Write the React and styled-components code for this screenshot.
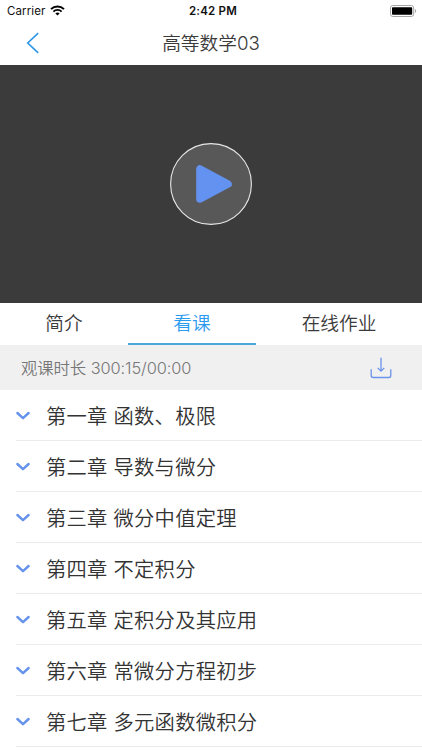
import React from "react";
import styled, { createGlobalStyle } from "styled-components";

const chapters = [
  "第一章 函数、极限",
  "第二章 导数与微分",
  "第三章 微分中值定理",
  "第四章 不定积分",
  "第五章 定积分及其应用",
  "第六章 常微分方程初步",
  "第七章 多元函数微积分",
];

const tabs = ["简介", "看课", "在线作业"];

const WifiIcon = () => (
  <svg width="15" height="11" viewBox="0 0 15 11" fill="none" stroke="#000">
    <path d="M1 4.1a9.3 9.3 0 0 1 13 0" strokeWidth="2" />
    <path d="M3.4 6.6a5.8 5.8 0 0 1 8.2 0" strokeWidth="1.9" />
    <path d="M7.5 10.6 5.4 8.5a3 3 0 0 1 4.2 0z" fill="#000" stroke="none" />
  </svg>
);

const BatteryIcon = () => (
  <svg width="28" height="12" viewBox="0 0 28 12">
    <rect x="0.5" y="0.5" width="23.2" height="11" rx="2.4" fill="#fff" stroke="#a6a6a6" />
    <rect x="2" y="2.3" width="20.2" height="7.4" rx="0.8" fill="#000" />
    <path d="M25 4v4c1.6-.5 1.6-3.5 0-4z" fill="#a6a6a6" />
  </svg>
);

const BackIcon = () => (
  <svg width="14" height="22" viewBox="0 0 14 22" fill="none">
    <path d="M12.2 1.2 1.7 11l10.5 9.8" stroke="#2b96e8" strokeWidth="1.6" />
  </svg>
);

const PlayIcon = () => (
  <svg width="82" height="82" viewBox="0 0 82 82">
    <circle cx="41" cy="41" r="40.4" fill="#585858" stroke="#e8e8e8" strokeWidth="1.1" />
    <path
      d="M30 26v30L58 41z"
      fill="#6492f0"
      stroke="#6492f0"
      strokeWidth="7.6"
      strokeLinejoin="round"
    />
  </svg>
);

const DownloadIcon = () => (
  <svg width="22" height="22" viewBox="0 0 22 22" fill="none" stroke="#6b93ec">
    <path d="M11 .8v13M7.7 10.9 11 14.2l3.3-3.3" strokeWidth="1.3" />
    <path d="M1.2 12.3v6.2a2 2 0 0 0 2 2h15.6a2 2 0 0 0 2-2v-6.2" strokeWidth="1.3" />
  </svg>
);

const ChevronIcon = () => (
  <svg width="14" height="9" viewBox="0 0 14 9" fill="none">
    <path
      d="M1.4 2 7 7.2 12.6 2"
      stroke="#6492ec"
      strokeWidth="2.4"
      strokeLinecap="round"
      strokeLinejoin="round"
    />
  </svg>
);

const App = () => (
  <Page>
    <GlobalStyle />
    <StatusBar>
      <Carrier>
        Carrier
        <WifiIcon />
      </Carrier>
      <Clock>2:42 PM</Clock>
      <Battery>
        <BatteryIcon />
      </Battery>
    </StatusBar>
    <NavBar>
      <BackButton aria-label="返回">
        <BackIcon />
      </BackButton>
      <Title>高等数学03</Title>
    </NavBar>
    <Player>
      <PlayIcon />
    </Player>
    <TabBar>
      {tabs.map((tab) => (
        <Tab key={tab} $active={tab === "看课"}>
          {tab}
        </Tab>
      ))}
    </TabBar>
    <Duration>
      <span>观课时长 300:15/00:00</span>
      <DownloadIcon />
    </Duration>
    <ChapterList>
      {chapters.map((chapter) => (
        <Chapter key={chapter}>
          <ChevronIcon />
          <span>{chapter}</span>
        </Chapter>
      ))}
    </ChapterList>
  </Page>
);

const GlobalStyle = createGlobalStyle`
  * {
    box-sizing: border-box;
  }
  body {
    margin: 0;
    background: #fff;
    overflow: hidden;
  }
  svg {
    display: block;
    flex-shrink: 0;
  }
`;

const Page = styled.div`
  width: 422px;
  height: 750px;
  overflow: hidden;
  background: #fff;
  color: #3a3a3a;
  font-family: Inter, "Noto Sans CJK SC", sans-serif;
  font-weight: 350;
  white-space: nowrap;
`;

const StatusBar = styled.div`
  display: grid;
  grid-template-columns: 1fr auto 1fr;
  align-items: center;
  height: 21px;
  padding: 0 4px 0 7px;
  color: #111;
  font-size: 11.5px;
`;

const Carrier = styled.div`
  display: flex;
  align-items: center;
  gap: 5px;
  font-weight: 400;
  letter-spacing: 0.1px;
`;

const Clock = styled.div`
  padding-left: 1px;
  font-weight: 600;
  letter-spacing: 0.2px;
`;

const Battery = styled.div`
  display: flex;
  justify-content: flex-end;
`;

const NavBar = styled.header`
  display: grid;
  grid-template-columns: 60px 1fr 60px;
  align-items: center;
  height: 44px;
`;

const BackButton = styled.button`
  padding: 0 0 0 26px;
  border: 0;
  background: none;
`;

const Title = styled.h1`
  margin: 0;
  padding-top: 2px;
  font-size: 18.7px;
  font-weight: 350;
  line-height: 28px;
  text-align: center;
`;

const Player = styled.div`
  display: flex;
  align-items: center;
  justify-content: center;
  height: 238px;
  background: #3b3b3b;
`;

const TabBar = styled.nav`
  display: grid;
  grid-template-columns: 128px 128px 1fr;
  height: 42px;
`;

const Tab = styled.div`
  height: 42px;
  border-bottom: 2px solid ${({ $active }) => ($active ? "#4ba6dc" : "transparent")};
  color: ${({ $active }) => ($active ? "#2b9bef" : "#3a3a3a")};
  font-size: 18.7px;
  line-height: 42px;
  text-align: center;
`;

const Duration = styled.div`
  display: flex;
  align-items: center;
  justify-content: space-between;
  height: 45px;
  padding: 0 30px 0 21px;
  background: #f0f0f0;
  color: #777;
  font-size: 16.4px;
  letter-spacing: -0.1px;
  line-height: 24px;
`;

const ChapterList = styled.div`
  padding-left: 16px;
`;

const Chapter = styled.div`
  display: flex;
  align-items: center;
  gap: 16px;
  height: 51px;
  border-bottom: 1px solid #ececec;
  color: #333;
  font-size: 20.3px;
  letter-spacing: 0.25px;
`;

export default App;
